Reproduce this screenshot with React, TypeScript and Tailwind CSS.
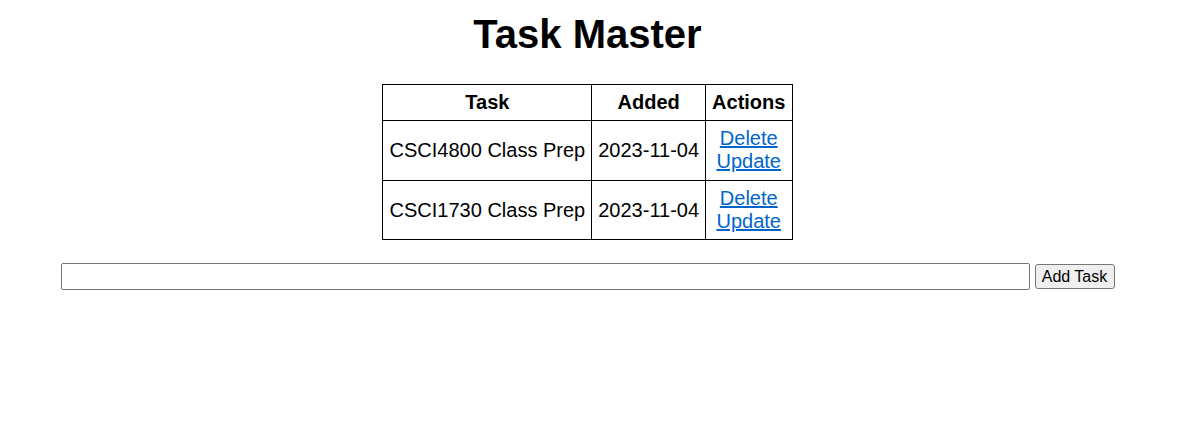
import React from "react";

const rows = [
  { task: "CSCI4800 Class Prep", added: "2023-11-04", pb: "pb-[7px]" },
  { task: "CSCI1730 Class Prep", added: "2023-11-04", pb: "pb-[6px]" },
];

export default function App() {
  return (
    <div className="font-['Liberation_Sans',Arial,sans-serif] text-black bg-white w-[1175px] min-h-[446px] flex flex-col items-center">
      <h1 className="mt-[11px] text-[40px] leading-[46px] font-bold">Task Master</h1>
      <table className="mt-[27px] border-collapse text-[20px] leading-[23px]">
        <thead>
          <tr>
            <th className="border border-black pl-[7px] pr-[6px] py-[6px] font-bold text-center">Task</th>
            <th className="border border-black px-[6px] py-[6px] font-bold text-center">Added</th>
            <th className="border border-black pl-[6px] pr-[7px] py-[6px] font-bold text-center">Actions</th>
          </tr>
        </thead>
        <tbody>
          {rows.map((r, i) => (
            <tr key={i}>
              <td className={`border border-black pl-[7px] pr-[6px] pt-[6px] ${r.pb} align-middle`}>{r.task}</td>
              <td className={`border border-black px-[6px] pt-[6px] ${r.pb} align-middle`}>{r.added}</td>
              <td className={`border border-black pl-[6px] pr-[7px] pt-[6px] ${r.pb} align-middle text-center`}>
                <a href="#" className="text-[#0066cc] underline block">Delete</a>
                <a href="#" className="text-[#0066cc] underline block">Update</a>
              </td>
            </tr>
          ))}
        </tbody>
      </table>
      <div className="mt-[23px] flex items-center gap-[5px]">
        <input
          type="text"
          className="w-[969px] h-[27px] border border-[#767676] rounded-[2px] bg-white px-[2px] text-[16px]"
        />
        <button className="w-[80px] h-[25px] border border-[#767676] rounded-[3px] bg-[#efefef] text-[16px] leading-[18px] font-['Liberation_Sans',Arial,sans-serif]">
          Add Task
        </button>
      </div>
    </div>
  );
}
